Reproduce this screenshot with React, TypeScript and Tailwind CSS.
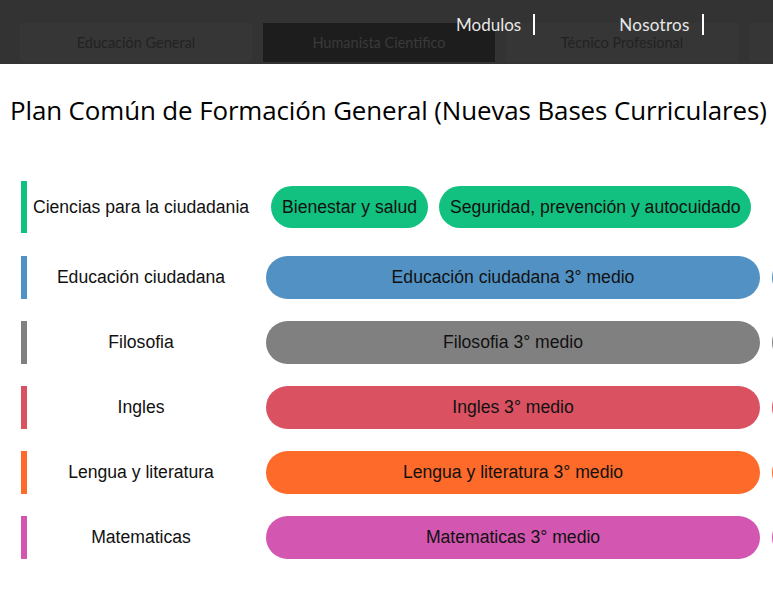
import React from 'react';

const tabs = [
  { label: 'Educación General', active: false },
  { label: 'Humanista Cientifico', active: true },
  { label: 'Técnico Profesional', active: false },
  { label: '', active: false },
];

const subjects = [
  { name: 'Educación ciudadana', bar: 'bg-[#5291c4]', pill: 'Educación ciudadana 3° medio' },
  { name: 'Filosofia', bar: 'bg-[#808080]', pill: 'Filosofia 3° medio' },
  { name: 'Ingles', bar: 'bg-[#da5162]', pill: 'Ingles 3° medio' },
  { name: 'Lengua y literatura', bar: 'bg-[#fe6a2a]', pill: 'Lengua y literatura 3° medio' },
  { name: 'Matematicas', bar: 'bg-[#d356b0]', pill: 'Matematicas 3° medio' },
];

const App = () => {
  return (
    <div className="w-[773px] h-[597px] overflow-hidden bg-white font-['Liberation_Sans',Arial,sans-serif]">
      {/* Top bar with tabs behind and nav links */}
      <header className="relative h-16 bg-[#333333] overflow-hidden">
        <div className="flex gap-[11px] pl-5 pt-[23px]">
          {tabs.map((tab, i) => (
            <div
              key={i}
              className={`w-[232px] h-[39px] flex-shrink-0 flex items-center justify-center text-[14.5px] font-['Lato',sans-serif] ${
                tab.active ? 'bg-[#1d1d1d] text-[#3a3a3a]' : 'bg-[#363636] text-[#222222]'
              }`}
            >
              {tab.label}
            </div>
          ))}
        </div>
        <nav className="absolute top-[14px] left-[456px] flex font-['Lato',sans-serif] text-[17px] text-[#e8e8e8] leading-[21px]">
          <a className="pr-3 border-r-2 border-white">Modulos</a>
          <a className="ml-[84px] pr-3 border-r-2 border-white tracking-[0.3px]">Nosotros</a>
        </nav>
      </header>

      <h1 className="pl-[10px] pt-[29px] text-[25.9px] leading-[34px] text-black font-['Open_Sans',sans-serif] tracking-[-0.1px]">
        Plan Común de Formación General (Nuevas Bases Curriculares)
      </h1>

      <div className="mt-[54px] pl-[21px] text-[17.6px] text-[#111111]">
        {/* First row with two pills */}
        <div className="flex items-stretch mb-[23px]">
          <div className="w-[6px] bg-[#12c07f] flex-shrink-0" />
          <div className="w-[228px] flex items-center justify-center">Ciencias para la ciudadania</div>
          <div className="flex ml-[11px]">
            <div className="m-[5px] h-[42px] px-[11px] rounded-full bg-[#12c07f] flex items-center whitespace-nowrap">
              Bienestar y salud
            </div>
            <div className="my-[5px] ml-[6px] h-[42px] px-[11px] rounded-full bg-[#12c07f] flex items-center whitespace-nowrap">
              Seguridad, prevención y autocuidado
            </div>
          </div>
        </div>

        {subjects.map((s) => (
          <div key={s.name} className="flex items-stretch h-[43px] mb-[22px]">
            <div className={`w-[6px] flex-shrink-0 ${s.bar}`} />
            <div className="w-[228px] flex-shrink-0 flex items-center justify-center">{s.name}</div>
            <div className="flex gap-3 ml-[11px]">
              <div className={`w-[494px] flex-shrink-0 rounded-full flex items-center justify-center whitespace-nowrap ${s.bar}`}>
                {s.pill}
              </div>
              <div className={`w-[494px] flex-shrink-0 rounded-full ${s.bar}`} />
            </div>
          </div>
        ))}
      </div>
    </div>
  );
};

export default App;
